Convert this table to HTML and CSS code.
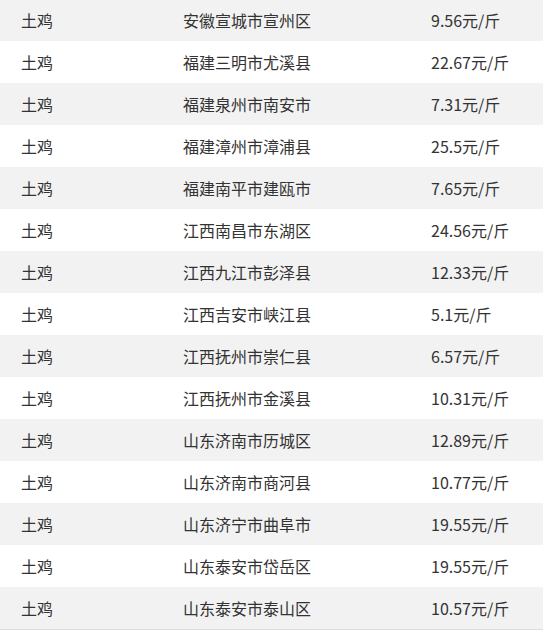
FILE: index.html
```html
<!DOCTYPE html>
<html lang="zh-CN">
<head>
<meta charset="utf-8">
<link rel="stylesheet" href="styles.css">
</head>
<body>
<div class="table">
  <div class="row"><span>土鸡</span><span>安徽宣城市宣州区</span><span>9.56元/斤</span></div>
  <div class="row"><span>土鸡</span><span>福建三明市尤溪县</span><span>22.67元/斤</span></div>
  <div class="row"><span>土鸡</span><span>福建泉州市南安市</span><span>7.31元/斤</span></div>
  <div class="row"><span>土鸡</span><span>福建漳州市漳浦县</span><span>25.5元/斤</span></div>
  <div class="row"><span>土鸡</span><span>福建南平市建瓯市</span><span>7.65元/斤</span></div>
  <div class="row"><span>土鸡</span><span>江西南昌市东湖区</span><span>24.56元/斤</span></div>
  <div class="row"><span>土鸡</span><span>江西九江市彭泽县</span><span>12.33元/斤</span></div>
  <div class="row"><span>土鸡</span><span>江西吉安市峡江县</span><span>5.1元/斤</span></div>
  <div class="row"><span>土鸡</span><span>江西抚州市崇仁县</span><span>6.57元/斤</span></div>
  <div class="row"><span>土鸡</span><span>江西抚州市金溪县</span><span>10.31元/斤</span></div>
  <div class="row"><span>土鸡</span><span>山东济南市历城区</span><span>12.89元/斤</span></div>
  <div class="row"><span>土鸡</span><span>山东济南市商河县</span><span>10.77元/斤</span></div>
  <div class="row"><span>土鸡</span><span>山东济宁市曲阜市</span><span>19.55元/斤</span></div>
  <div class="row"><span>土鸡</span><span>山东泰安市岱岳区</span><span>19.55元/斤</span></div>
  <div class="row"><span>土鸡</span><span>山东泰安市泰山区</span><span>10.57元/斤</span></div>
</div>
</body>
</html>
```
FILE: styles.css
```css
html, body {
  margin: 0;
  padding: 0;
  background: #fff;
}
.table {
  margin-top: -1px;
  width: 543px;
  border-bottom: 1px solid #dcdcdc;
  font-family: "Noto Sans CJK SC", "Noto Sans", sans-serif;
  font-size: 16px;
  color: #333;
}
.row {
  display: grid;
  grid-template-columns: 162px 248px 1fr;
  align-items: center;
  height: 42px;
  padding-left: 21px;
  box-sizing: border-box;
}
.row:nth-child(odd) {
  background: #f2f2f2;
}
.row span {
  white-space: nowrap;
}
```
